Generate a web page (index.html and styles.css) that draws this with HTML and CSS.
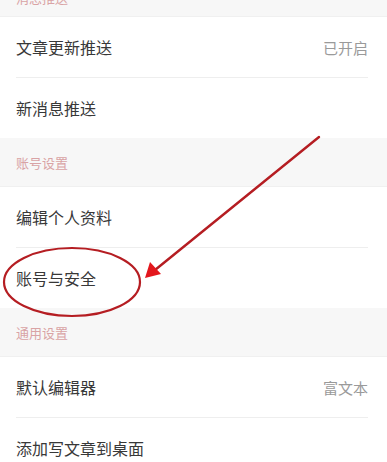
FILE: index.html
```
<!DOCTYPE html>
<html lang="zh">
<head>
<meta charset="utf-8">
<link rel="stylesheet" href="styles.css">
</head>
<body>
<div class="page">
  <div class="section-head section-head--top">消息推送</div>
  <div class="group">
    <div class="row"><span class="label">文章更新推送</span><span class="value">已开启</span></div>
    <div class="row"><span class="label">新消息推送</span></div>
  </div>
  <div class="section-head">账号设置</div>
  <div class="group">
    <div class="row"><span class="label">编辑个人资料</span></div>
    <div class="row"><span class="label">账号与安全</span></div>
  </div>
  <div class="section-head">通用设置</div>
  <div class="group">
    <div class="row"><span class="label">默认编辑器</span><span class="value">富文本</span></div>
    <div class="row"><span class="label">添加写文章到桌面</span></div>
  </div>
  <svg class="annot" width="387" height="462" viewBox="0 0 387 462">
    <ellipse cx="72" cy="282" rx="68" ry="34" fill="none" stroke="#b51d22" stroke-width="2.2"/>
    <line x1="319" y1="137" x2="155" y2="270" stroke="#b51d22" stroke-width="2.4" stroke-linecap="round"/>
    <polygon points="145,278 150,262 161,274" fill="#e3171d"/>
  </svg>
</div>
</body>
</html>
```
FILE: styles.css
```
html, body {
  margin: 0;
  padding: 0;
  background: #ffffff;
}
.page {
  position: relative;
  width: 387px;
  height: 462px;
  overflow: hidden;
  font-family: "Noto Sans CJK SC", "Noto Sans", sans-serif;
}
.section-head {
  height: 49px;
  box-sizing: border-box;
  background: #f7f7f7;
  color: #d9a3a5;
  font-size: 13px;
  padding-left: 16px;
  display: flex;
  align-items: center;
  border-bottom: 1px solid #f0f0f0;
}
.section-head--top {
  height: 17px;
  align-items: flex-end;
  line-height: 13px;
  padding-bottom: 12px;
  overflow: hidden;
}
.group {
  background: #ffffff;
}
.row {
  height: 61px;
  box-sizing: border-box;
  margin-left: 16px;
  margin-right: 19px;
  display: flex;
  align-items: center;
  justify-content: space-between;
  border-bottom: 1px solid #eeeeee;
}
.row:last-child {
  border-bottom: none;
  margin-right: 0;
  padding-right: 19px;
  height: 60px;
}
.label {
  font-size: 16px;
  color: #383838;
}
.value {
  font-size: 15px;
  color: #9a9a9a;
}
.annot {
  position: absolute;
  left: 0;
  top: 0;
  pointer-events: none;
}
```
